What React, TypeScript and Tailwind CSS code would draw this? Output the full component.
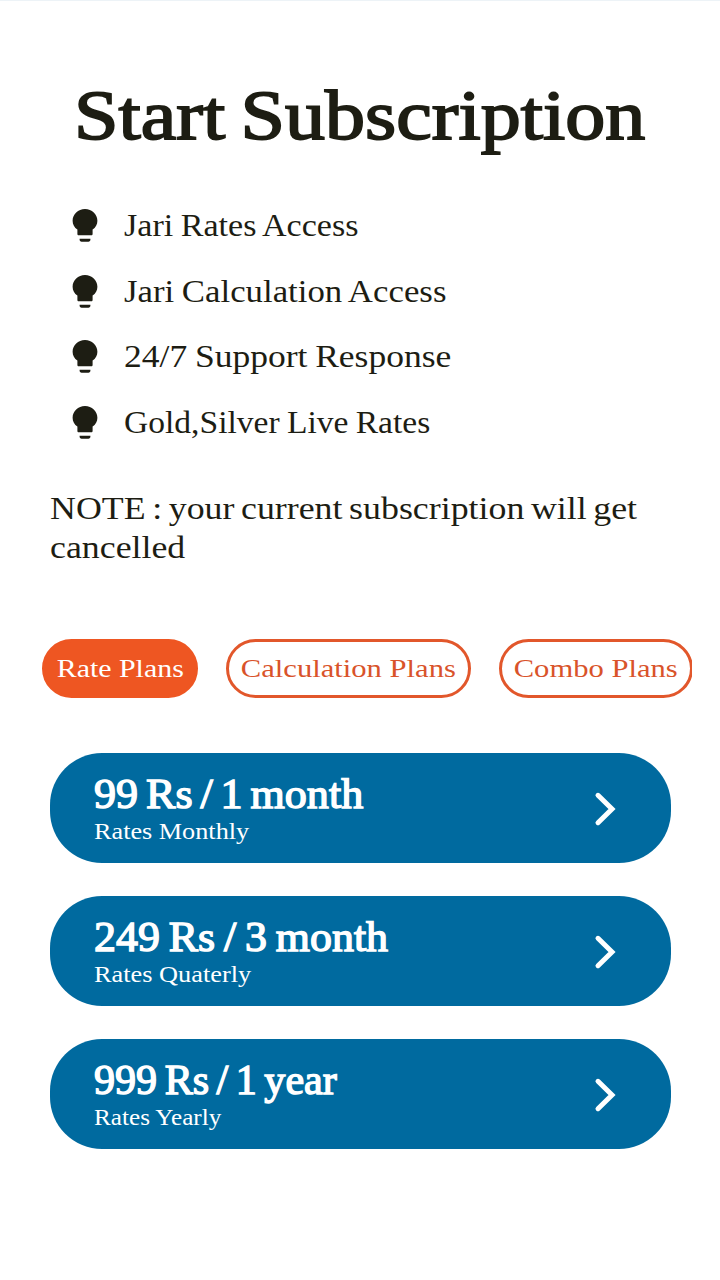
const features = [
  { label: 'Jari Rates Access', fit: 'scale-x-[1.118] [word-spacing:-1px]' },
  { label: 'Jari Calculation Access', fit: 'scale-x-[1.141] [word-spacing:-1px]' },
  { label: '24/7 Support Response', fit: 'scale-x-[1.165] [word-spacing:-1px]' },
  { label: 'Gold,Silver Live Rates', fit: 'scale-x-[1.1] [word-spacing:-1px]' },
];

const tabs = [
  { label: 'Rate Plans', box: 'w-[156px] bg-[#ee5622] text-white border-[#ee5622]', fit: 'scale-x-[1.15]' },
  { label: 'Calculation Plans', box: 'w-[245px] text-[#d9532a] border-[#e2572b]', fit: 'scale-x-[1.177]' },
  { label: 'Combo Plans', box: 'w-[194px] text-[#d9532a] border-[#e2572b]', fit: 'scale-x-[1.176]' },
];

const plans = [
  { price: '99 Rs / 1 month', period: 'Rates Monthly', priceFit: 'scale-x-[1.05] [word-spacing:-3px]', periodFit: 'scale-x-[1.14]' },
  { price: '249 Rs / 3 month', period: 'Rates Quaterly', priceFit: 'scale-x-[1.045] [word-spacing:-2px]', periodFit: 'scale-x-[1.145]' },
  { price: '999 Rs / 1 year', period: 'Rates Yearly', priceFit: 'scale-x-[1.002] [word-spacing:-3px]', periodFit: 'scale-x-[1.095]' },
];

function Bulb() {
  return (
    <svg className="mt-0.5 h-[34px] w-[26px] shrink-0" viewBox="0 0 26 34" fill="#1d1d13">
      <path d="M13 0C6.100 0 .6 5.200.6 11.700c0 3.900 1.800 6.700 4.800 8.900V25c0 .8.5 1.300 1.300 1.300h12.600c.8 0 1.300-.5 1.300-1.300v-4.400c3-2.200 4.800-5 4.800-8.900C25.400 5.200 19.900 0 13 0Z" />
      <path d="M7.600 29.700h10.800v.9c0 1.400-.7 2.100-2 2.100H9.600c-1.300 0-2-.7-2-2.100Z" />
    </svg>
  );
}

export default function App() {
  return (
    <main className="flex h-[1280px] w-[720px] flex-col overflow-hidden border-t border-[#edf3f7] bg-white pt-[75px] font-['Liberation_Serif',serif] text-[#1d1d13]">
      <h1 className="ml-[74px] h-20 origin-left scale-x-[1.16] self-start whitespace-nowrap text-[69px] leading-[80px] [word-spacing:-4px] [-webkit-text-stroke:1.8px_#1d1d13]">
        Start Subscription
      </h1>

      <ul className="mt-[36px] flex flex-col pl-[72px]">
        {features.map((f) => (
          <li key={f.label} className="flex h-[65.7px] items-center gap-[26px]">
            <Bulb />
            <span className={`origin-left whitespace-nowrap pt-1 text-[30.5px] leading-[65.7px] ${f.fit}`}>{f.label}</span>
          </li>
        ))}
      </ul>

      <p className="mt-[35px] flex flex-col items-start pl-[50px] text-[30.5px] leading-[39px]">
        <span className="origin-left scale-x-[1.175] whitespace-nowrap [word-spacing:-2px]">NOTE : your current subscription will get</span>
        <span className="origin-left scale-x-[1.175] whitespace-nowrap">cancelled</span>
      </p>

      <nav className="ml-[42px] mt-[71px] flex w-[650px] gap-7 overflow-hidden">
        {tabs.map((t) => (
          <button
            key={t.label}
            className={`flex h-[59px] shrink-0 items-center justify-center whitespace-nowrap rounded-full border-[3.5px] text-[26px] ${t.box}`}
          >
            <span className={t.fit}>{t.label}</span>
          </button>
        ))}
      </nav>

      <section className="ml-[50px] mt-[55.5px] flex w-[621px] flex-col gap-[33px]">
        {plans.map((p) => (
          <button
            key={p.price}
            className="flex h-[110px] items-center justify-between rounded-[52px] bg-[#006a9f] pl-11 pr-[54px] text-left text-white"
          >
            <span className="flex flex-col items-start pt-[3px]">
              <span className={`origin-left whitespace-nowrap text-[42px] leading-[44px] [-webkit-text-stroke:1.4px_white] ${p.priceFit}`}>
                {p.price}
              </span>
              <span className={`origin-left whitespace-nowrap text-[23px] leading-[32px] ${p.periodFit}`}>{p.period}</span>
            </span>
            <svg className="mt-0.5 h-9 w-6" viewBox="0 0 24 36" fill="none" stroke="white" strokeWidth="5" strokeLinecap="round" strokeLinejoin="miter">
              <path d="M5 4.300 19 18 5 31.700" />
            </svg>
          </button>
        ))}
      </section>
    </main>
  );
}
